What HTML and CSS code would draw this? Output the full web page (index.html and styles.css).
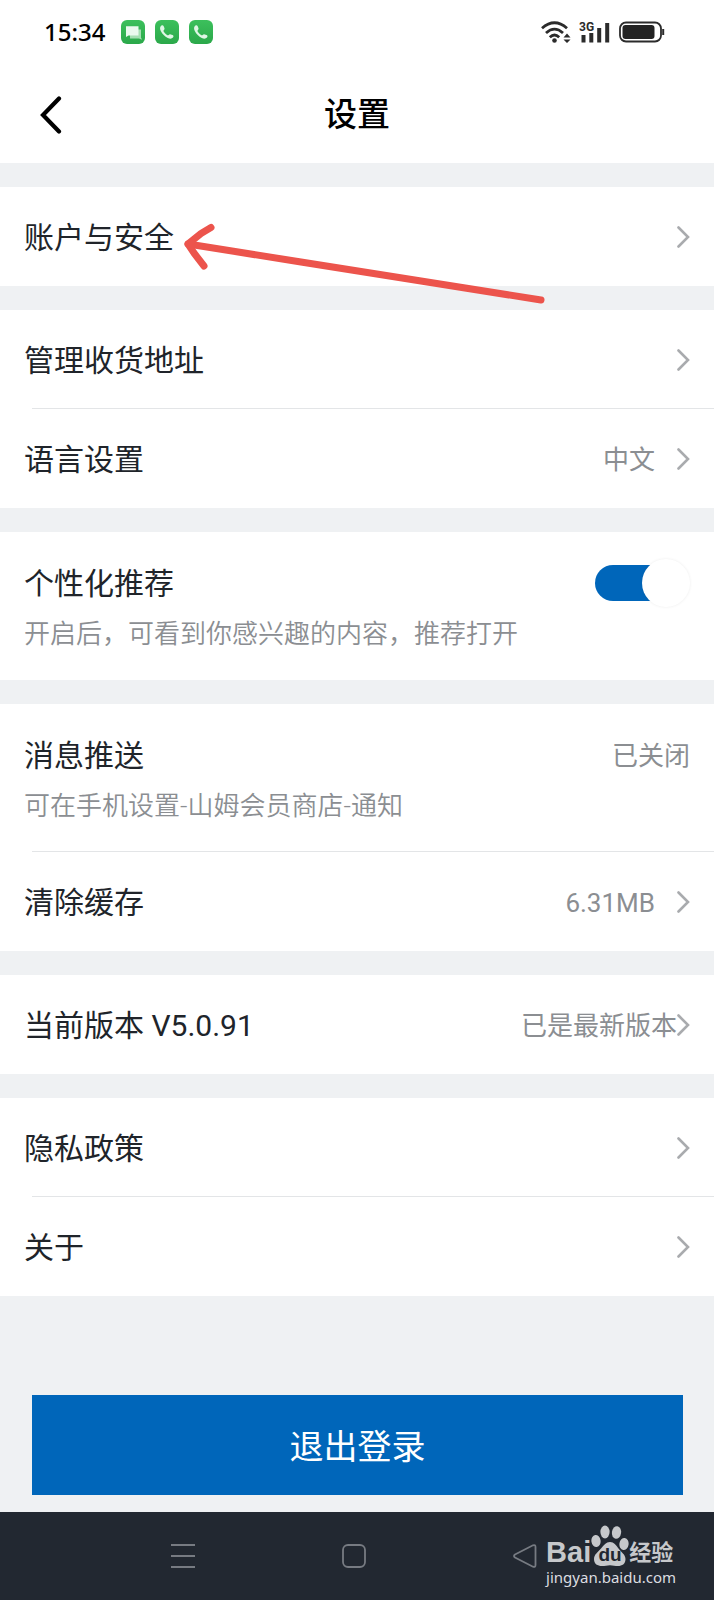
FILE: index.html
```html
<!DOCTYPE html>
<html lang="zh-CN">
<head>
	<meta charset="UTF-8">
	<meta name="viewport" content="width=device-width, initial-scale=1">
	<title>设置</title>
	<link rel="stylesheet" href="styles.css">
</head>
<body>
	<svg class="defs" width="0" height="0">
		<symbol id="arrow" viewBox="0 0 13 22">
			<path d="M1.5 1.5L11 11L1.5 20.5" fill="none" stroke="currentColor" stroke-width="2.6" stroke-linecap="round"/>
		</symbol>
		<symbol id="phone" viewBox="0 0 24 24">
			<path d="M6.2 5.800c1-.8 2-.6 2.500.4l.7 1.900c.3.9.1 1.500-.5 2-.5.5-.5 1-.1 1.700.8 1.300 1.900 2.400 3.200 3.200.7.4 1.200.4 1.700-.1.600-.6 1.200-.8 2-.5l1.900.7c1 .5 1.200 1.500.4 2.500-1.300 1.500-3.200 1.400-5.200.4-3-1.500-5.500-4-7-7C4.800 9 4.700 7 6.200 5.800z" fill="#dff6e5"/>
		</symbol>
	</svg>

	<div class="status">
		<div class="status-left">
			<span class="time">15:34</span>
			<span class="app">
				<svg width="24" height="24" viewBox="0 0 24 24">
					<path d="M9 9.500h11v8l1 2.300-3-1.300H9z" fill="#a5dfb3"/>
					<path d="M5 6.200h12.500V15.500H7.500L5 17z" fill="#eaf9ee"/>
				</svg>
			</span>
			<span class="app"><svg width="24" height="24"><use href="#phone"/></svg></span>
			<span class="app"><svg width="24" height="24"><use href="#phone"/></svg></span>
		</div>
		<div class="status-right">
			<svg width="30" height="22" viewBox="0 0 30 22">
				<g fill="none" stroke="#2b2b2b" stroke-width="2.800">
					<path d="M1 7.200Q13.500 -3.800 26 7.200"/>
					<path d="M5 12Q13.500 4.200 22 12"/>
					<path d="M8.800 16.200Q13.500 11.800 18.200 16.200"/>
				</g>
				<circle cx="13.500" cy="19.500" r="2.300" fill="#2b2b2b"/>
				<path d="M22.500 16.500L26 12.500L29.500 16.500zM22.500 18.500L26 22L29.500 18.500z" fill="#2b2b2b"/>
			</svg>
			<svg width="32" height="22" viewBox="0 0 32 22">
				<text class="net" x="0" y="10">3G</text>
				<path d="M4.500 14v7.500M12.300 12v9.500M20.200 7v14.500M28.200 2v19.500" stroke="#2b2b2b" stroke-width="4"/>
			</svg>
			<svg width="46" height="22" viewBox="0 0 46 22">
				<rect x="1" y="1.500" width="41" height="19" rx="6" fill="none" stroke="#2b2b2b" stroke-width="1.800"/>
				<rect x="3.500" y="4" width="32" height="14" rx="3" fill="#222"/>
				<path d="M44.200 8v6" stroke="#2b2b2b" stroke-width="2"/>
			</svg>
		</div>
	</div>

	<header class="header">
		<button class="back" type="button" aria-label="返回">
			<svg width="22" height="38" viewBox="0 0 22 38">
				<path d="M19 2.500L3 19L19 35.500" fill="none" stroke="#000" stroke-width="4.200" stroke-linecap="round"/>
			</svg>
		</button>
		<h1>设置</h1>
	</header>

	<main class="main">
		<section class="group">
			<a class="row" href="#">
				<span class="name">账户与安全</span>
				<svg class="arrow"><use href="#arrow"/></svg>
			</a>
			<svg class="pointer" width="370" height="96" viewBox="0 0 370 96">
				<g fill="none" stroke="#ec544c" stroke-width="7" stroke-linecap="round" stroke-linejoin="round">
					<path d="M7 32L120 50L240 69L360 88"/>
					<path d="M30 15.500L20 21.500L7 32L13 41L23 54"/>
				</g>
			</svg>
		</section>

		<section class="group">
			<a class="row" href="#">
				<span class="name">管理收货地址</span>
				<svg class="arrow"><use href="#arrow"/></svg>
			</a>
			<hr class="line">
			<a class="row" href="#">
				<span class="name">语言设置</span>
				<span class="value gap">中文</span>
				<svg class="arrow"><use href="#arrow"/></svg>
			</a>
		</section>

		<section class="group">
			<div class="row-tall">
				<div class="top">
					<label class="name" for="recommend">个性化推荐</label>
					<input class="switch" type="checkbox" id="recommend" checked>
				</div>
				<p class="desc">开启后，可看到你感兴趣的内容，推荐打开</p>
			</div>
		</section>

		<section class="group">
			<div class="row-tall">
				<div class="top">
					<span class="name">消息推送</span>
					<span class="value">已关闭</span>
				</div>
				<p class="desc">可在手机设置-山姆会员商店-通知</p>
			</div>
			<hr class="line">
			<a class="row" href="#">
				<span class="name">清除缓存</span>
				<span class="value gap">6.31MB</span>
				<svg class="arrow"><use href="#arrow"/></svg>
			</a>
		</section>

		<section class="group">
			<a class="row" href="#">
				<span class="name">当前版本 V5.0.91</span>
				<span class="value">已是最新版本</span>
				<svg class="arrow"><use href="#arrow"/></svg>
			</a>
		</section>

		<section class="group">
			<a class="row" href="#">
				<span class="name">隐私政策</span>
				<svg class="arrow"><use href="#arrow"/></svg>
			</a>
			<hr class="line">
			<a class="row" href="#">
				<span class="name">关于</span>
				<svg class="arrow"><use href="#arrow"/></svg>
			</a>
		</section>

		<button class="logout" type="button">退出登录</button>
	</main>

	<nav class="nav">
		<button type="button" aria-label="菜单">
			<svg width="24" height="26" viewBox="0 0 24 26">
				<path d="M0 2h24M0 13h24M0 24h24" stroke="#777b82" stroke-width="2"/>
			</svg>
		</button>
		<button type="button" aria-label="主页">
			<svg width="24" height="26" viewBox="0 0 24 26">
				<rect x="1" y="2" width="22" height="22" rx="5" fill="none" stroke="#777b82" stroke-width="1.800"/>
			</svg>
		</button>
		<button type="button" aria-label="后退">
			<svg width="24" height="26" viewBox="0 0 24 26">
				<path d="M2 11.500L20 2.300Q22.500 1.500 22.500 4V22Q22.500 24.500 20 23.700L2 14.500Q0 13 2 11.500z" fill="none" stroke="#777b82" stroke-width="1.800"/>
			</svg>
		</button>
		<div class="mark">
			<div class="logo">
				<span class="bai">Bai</span>
				<svg width="38" height="42" viewBox="0 0 38 42">
					<g fill="#c6c8cb">
						<ellipse cx="5" cy="16" rx="4.600" ry="6" transform="rotate(-8 5 16)"/>
						<ellipse cx="14" cy="7" rx="4.600" ry="6.400"/>
						<ellipse cx="25.500" cy="7.500" rx="4.600" ry="6.400" transform="rotate(8 25.500 7.500)"/>
						<ellipse cx="33" cy="19" rx="4.600" ry="6" transform="rotate(8 33 19)"/>
						<path d="M19 17c4 0 6 3 8.500 6.500s7 6 7 10.500c0 5-3.500 7-7.500 7-3 0-5-.8-8-.8s-5 .8-8 .8c-4.500 0-8-2-8-7 0-4.500 4-7 7-10.500S15 17 19 17z"/>
					</g>
					<text class="du" x="19" y="36" text-anchor="middle">du</text>
				</svg>
				<span class="exp">经验</span>
			</div>
			<div class="site">jingyan.baidu.com</div>
		</div>
	</nav>
</body>
</html>
```
FILE: styles.css
```css
*{box-sizing: border-box;}
body{margin: 0;min-height: 100vh;display: flex;flex-direction: column;background-color: #eff1f3;
	font-family: Roboto,"Noto Sans CJK SC",sans-serif;color: #20242a;}
button{padding: 0;border: 0;background: none;font-family: inherit;cursor: pointer;}
svg{display: block;flex: none;}
.defs{position: absolute;}

.status{display: flex;justify-content: space-between;align-items: center;height: 64px;padding: 0 49px 0 44px;background-color: #fff;}
.status-left{display: flex;align-items: center;gap: 10px;}
.status-right{display: flex;align-items: center;gap: 8px;}
.time{margin-right: 6px;font: 500 24px/32px "Noto Sans",sans-serif;color: #000;}
.app{border-radius: 6px;background: linear-gradient(#3cc05c,#2ba84a);}
.net{font: 700 12px Roboto,sans-serif;fill: #2b2b2b;}

.header{display: grid;grid-template-columns: 62px 1fr 62px;align-items: center;padding: 26px 0 24px;background-color: #fff;}
.header h1{margin: 0;font-size: 33px;line-height: 49px;font-weight: 500;text-align: center;color: #000;}
.back{justify-self: end;}

.main{flex: 1;display: flex;flex-direction: column;gap: 24px;padding: 24px 0 17px;}
.group{position: relative;background-color: #fff;}
.row{display: flex;align-items: center;padding: 27px 24px;color: inherit;text-decoration: none;}
.row-tall{padding: 28px 24px;}
.top{display: flex;align-items: center;}
.name{flex: 1;padding-top: 2px;font-size: 30px;line-height: 43px;}
.value{padding-top: 4px;font-size: 26px;line-height: 41px;color: #8b8e92;}
.gap{margin-right: 22px;}
.desc{margin: 11px 0 0;font-size: 26px;line-height: 36px;font-weight: 350;color: #8b8e92;}
.arrow{width: 13px;height: 22px;color: #a9abae;}
.line{height: 1px;margin: -1px 0 0 32px;border: 0;background-color: #e3e5e7;}
.pointer{position: absolute;top: 25px;left: 181px;z-index: 1;}

.switch{appearance: none;position: relative;width: 95px;height: 36px;margin: 0;cursor: pointer;
	border-radius: 18px;background: linear-gradient(90deg,#0066ba 70%,transparent 70%);}
.switch::after{content: "";position: absolute;top: -6px;right: 0;width: 48px;height: 48px;border-radius: 50%;
	background-color: #fff;box-shadow: 0 0 3px rgba(0,0,0,.08);}
.switch:not(:checked){background: #ccc;}
.switch:not(:checked)::after{right: auto;left: 0;}

.logout{margin: 75px 31px 0 32px;padding: 27px 0 23px;font-size: 34px;line-height: 50px;background-color: #0066ba;color: #fff;}

.nav{position: relative;display: flex;justify-content: space-between;padding: 31px 177px 31px 171px;background-color: #222831;}
.mark{position: absolute;right: 38px;bottom: 13px;color: #c6c8cb;}
.logo{display: flex;align-items: flex-end;}
.bai{font: 700 29px/30px "Liberation Sans",sans-serif;}
.du{font: 700 19px "Liberation Sans",sans-serif;fill: #222831;}
.exp{font-size: 22px;line-height: 28px;font-weight: 700;}
.site{font: 15px/20px "Noto Sans",sans-serif;color: #dcdde0;}
```
